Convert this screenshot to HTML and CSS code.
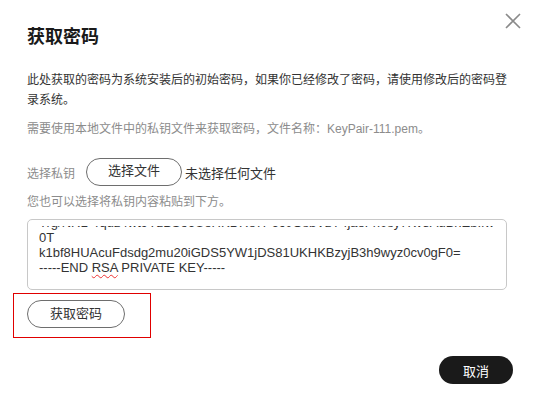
FILE: index.html
```html
<!DOCTYPE html>
<html lang="zh-CN">
<head>
    <meta charset="UTF-8">
    <meta name="viewport" content="width=device-width, initial-scale=1.0">
    <title>获取密码</title>
    <link rel="stylesheet" href="styles.css">
</head>
<body>
    <div class="dialog">
        <h1 class="dialog-title">获取密码</h1>
        <button class="close-btn" aria-label="关闭">
            <svg width="16" height="16" viewBox="0 0 16 16">
                <path d="M1 1L15 15M15 1L1 15" stroke="#8a8a8a" stroke-width="1.6" fill="none"/>
            </svg>
        </button>

        <div class="dialog-body">
            <p class="intro">此处获取的密码为系统安装后的初始密码，如果你已经修改了密码，请使用修改后的密码登录系统。</p>
            <p class="hint">需要使用本地文件中的私钥文件来获取密码，文件名称：KeyPair-111.pem。</p>

            <div class="file-row">
                <span class="field-label">选择私钥</span>
                <button class="pill-btn file-btn">选择文件</button>
                <span class="file-name">未选择任何文件</span>
            </div>
            <p class="hint paste-hint">您也可以选择将私钥内容粘贴到下方。</p>

            <div class="key-box">
                <div class="key-text" id="keyText" contenteditable="true" spellcheck="false">-----BEGIN RSA PRIVATE KEY-----
MIIEpAIBAAKCAQEAxk3bQ9tG2vZ7yLp0wqX8fN4cR1sJm6uH5oK9eT3aB7dW2
zVq8Ls1Ff0Pn4Yx7Ct2Gh6Jk9Mb3Rw5Eu1Io8Sd4Qa2Zp7Xv0Ny3Lt6Hs9Kq1
Wm4Bc8Df2Gj5Hk3Jn7Lp1Mr9Nt6Ps2Qv4Rx8Sz0Ua3Vb5Wc7Xe9Yf1Zg3ah5b
cj7dl9en1fp3gr5hs7it9ju1kv3lw5mx7ny9oz1pA3qB5rC7sD9tE1uF3vG5w
H7xI9yJ1zK3aL5bM7cN9dO1eP3fQ5gR7hS9iT1jU3kV5lW7mX9nY1oZ3pa5qb7
Trg/NRL+rquz4wt9YzBSo6UeHKDRe7P6c0OsbVzY4jaeFh0sy7Kv8AuBnEbIfw
0T
k1bf8HUAcuFdsdg2mu20iGDS5YW1jDS81UKHKBzyjB3h9wyz0cv0gF0=
-----END <span class="squiggle">RSA</span> PRIVATE KEY-----</div>
            </div>

            <div class="highlight">
                <button class="pill-btn get-btn">获取密码</button>
            </div>
        </div>

        <div class="dialog-footer">
            <button class="cancel-btn">取消</button>
        </div>
    </div>

    <script>
        // keep the end of the pasted key in view
        const keyText = document.getElementById('keyText');
        keyText.scrollTop = keyText.scrollHeight;
    </script>
</body>
</html>
```

FILE: styles.css
```css
* {
    margin: 0;
    padding: 0;
    box-sizing: border-box;
}

body {
    font-family: 'Liberation Sans', 'Noto Sans CJK SC', sans-serif;
    background: #fff;
    color: #333;
}

.dialog {
    position: relative;
    width: 540px;
    padding: 25px 27px 0 27px;
}

.dialog-title {
    font-size: 18px;
    line-height: 24px;
    font-weight: bold;
    color: #1a1a1a;
}

.close-btn {
    position: absolute;
    top: 13px;
    right: 19px;
    width: 16px;
    height: 16px;
    border: none;
    background: none;
    cursor: pointer;
}

.close-btn svg {
    display: block;
}

.dialog-body {
    width: 488px;
}

.intro {
    margin-top: 21px;
    font-size: 12px;
    line-height: 20px;
    color: #333;
}

.hint {
    margin-top: 9px;
    font-size: 12px;
    line-height: 20px;
    color: #8c8c8c;
}

.file-row {
    display: flex;
    align-items: center;
    margin-top: 19px;
    height: 28px;
}

.field-label {
    font-size: 12px;
    line-height: 20px;
    padding-top: 4px;
    color: #8c8c8c;
}

.pill-btn {
    height: 28px;
    border: 1px solid #6e6e6e;
    border-radius: 14px;
    background: #fff;
    font-family: inherit;
    font-size: 13px;
    line-height: 16px;
    color: #333;
    cursor: pointer;
}

.file-btn {
    width: 96px;
    margin-left: 11px;
    padding-bottom: 3px;
}

.file-name {
    font-size: 13px;
    line-height: 20px;
    padding-top: 4px;
    margin-left: 3px;
    color: #333;
}

.paste-hint {
    margin-top: 6px;
}

.key-box {
    margin-top: 7px;
    width: 480px;
    height: 71px;
    border: 1px solid #c8c8c8;
    border-radius: 5px;
    padding: 6px 4px 5px 11px;
}

.key-text {
    height: 58px;
    overflow-y: scroll;
    white-space: pre-wrap;
    word-break: break-all;
    font-family: 'Liberation Sans', Arial, sans-serif;
    font-size: 13px;
    line-height: 15px;
    color: #333;
    padding-bottom: 9px;
    outline: none;
}

.key-text::-webkit-scrollbar {
    width: 8px;
}

.key-text::-webkit-scrollbar-track {
    background: transparent;
    margin-bottom: 15px;
}

.key-text::-webkit-scrollbar-thumb {
    background: #d6d6d6;
    border-radius: 4px;
    min-height: 8px;
}

.squiggle {
    text-decoration: underline wavy #e33;
    text-decoration-thickness: 1px;
    text-underline-offset: 2px;
}

.highlight {
    display: inline-block;
    margin-top: 3px;
    margin-left: -14px;
    padding: 6px 25px 9px 13px;
    border: 1px solid #e00000;
}

.get-btn {
    width: 98px;
}

.dialog-footer {
    display: flex;
    justify-content: flex-end;
    margin-top: 18px;
}

.cancel-btn {
    width: 74px;
    height: 28px;
    border: none;
    border-radius: 14px;
    background: #1a1a1a;
    color: #fff;
    font-family: inherit;
    font-size: 13px;
    cursor: pointer;
}
```
